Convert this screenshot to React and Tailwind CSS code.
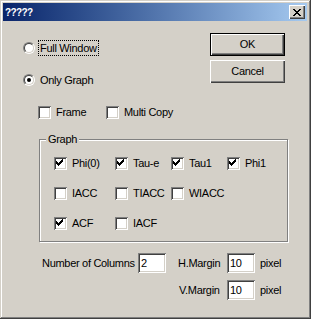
const CHECK = [
  [9, 3], [8, 4], [9, 4], [3, 5], [7, 5], [8, 5], [9, 5],
  [3, 6], [4, 6], [6, 6], [7, 6], [8, 6],
  [3, 7], [4, 7], [5, 7], [6, 7], [7, 7],
  [4, 8], [5, 8], [6, 8], [5, 9],
]

function CheckBox({ checked, label, width }) {
  return (
    <div className="flex items-center" style={{ width }}>
      <div className="w-[13px] h-[13px] bg-white shadow-[inset_1px_1px_#808080,inset_-1px_-1px_#ffffff,inset_2px_2px_#404040,inset_-2px_-2px_#d4d0c8] shrink-0">
        {checked && (
          <svg width="13" height="13" viewBox="0 0 13 13" shapeRendering="crispEdges">
            {CHECK.map(([x, y]) => (
              <rect key={x + "-" + y} x={x - 1} y={y - 1} width="1" height="1" fill="#000" />
            ))}
          </svg>
        )}
      </div>
      <span className="ml-[5px]">{label}</span>
    </div>
  )
}

function Radio({ checked, label, focus }) {
  return (
    <div className="flex items-center h-[16px]">
      <div className="w-[12px] h-[12px] rounded-full border border-t-[#808080] border-l-[#808080] border-b-white border-r-white flex">
        <div className="flex-1 rounded-full border border-t-[#404040] border-l-[#404040] border-b-[#d4d0c8] border-r-[#d4d0c8] bg-white flex items-center justify-center">
          {checked && <div className="w-[4px] h-[4px] rounded-full bg-black" />}
        </div>
      </div>
      <span className={"ml-[3px] px-[1px] leading-[14px] " + (focus ? "border border-dotted border-black" : "border border-transparent")}>
        {label}
      </span>
    </div>
  )
}

function Button({ children, isDefault }) {
  return (
    <div className={"w-[75px] h-[23px] flex items-center justify-center " + (isDefault ? "border border-black shadow-[inset_1px_1px_#ffffff,inset_-1px_-1px_#404040,inset_-2px_-2px_#808080]" : "shadow-[inset_1px_1px_#ffffff,inset_-1px_-1px_#404040,inset_-2px_-2px_#808080]")}>
      {children}
    </div>
  )
}

function Field({ value }) {
  return (
    <div className="w-[28px] h-[20px] bg-white shadow-[inset_1px_1px_#808080,inset_-1px_-1px_#ffffff,inset_2px_2px_#404040,inset_-2px_-2px_#d4d0c8] pl-[3px] flex items-center">
      {value}
    </div>
  )
}

export default function App() {
  return (
    <div
      className="w-[311px] h-[319px] bg-[#d4d0c8] p-[3px] text-[11px] text-black tracking-[-0.3px] shadow-[inset_-1px_-1px_#404040,inset_1px_1px_#d4d0c8,inset_-2px_-2px_#808080,inset_2px_2px_#ffffff] flex flex-col"
      style={{ fontFamily: '"Liberation Sans", Arial, sans-serif' }}
    >
      {/* title bar */}
      <div className="h-[18px] mr-[1px] bg-gradient-to-r from-[#0a246a] to-[#a6caf0] flex items-center pl-[2px] pr-[2px]">
        <span className="text-white text-[10px] font-bold tracking-[-0.6px]">?????</span>
        <div className="ml-auto w-[16px] h-[14px] bg-[#d4d0c8] shadow-[inset_1px_1px_#ffffff,inset_-1px_-1px_#404040,inset_-2px_-2px_#808080] flex items-center justify-center">
          <svg width="8" height="7" viewBox="0 0 8 7" shapeRendering="crispEdges">
            <path d="M0 0h2v1h-2zM6 0h2v1h-2zM1 1h2v1h-2zM5 1h2v1h-2zM2 2h4v1h-4zM3 3h2v1h-2zM2 4h4v1h-4zM1 5h2v1h-2zM5 5h2v1h-2zM0 6h2v1h-2zM6 6h2v1h-2z" fill="#000" />
          </svg>
        </div>
      </div>

      {/* top: radios + buttons */}
      <div className="flex">
        <div className="flex flex-col ml-[20px] mt-[19px] gap-[16px]">
          <Radio label="Full Window" focus />
          <Radio label="Only Graph" checked />
        </div>
        <div className="ml-auto mr-[23px] mt-[12px] flex flex-col gap-[4px]">
          <Button isDefault>OK</Button>
          <Button>Cancel</Button>
        </div>
      </div>

      {/* frame / multi copy */}
      <div className="flex ml-[35px] mt-[18px] h-[13px]">
        <CheckBox label="Frame" width={68} />
        <CheckBox label="Multi Copy" />
      </div>

      {/* Graph group */}
      <div className="relative ml-[36px] mr-[20px] mt-[20px] h-[103px] border border-[#808080] shadow-[1px_1px_#ffffff,inset_1px_1px_#ffffff]">
        <span className="absolute left-[6px] top-[-8px] bg-[#d4d0c8] px-[2px] leading-[14px]">Graph</span>
        <div className="flex flex-col gap-[17px] pl-[14px] pt-[17px]">
          <div className="flex h-[13px]">
            <CheckBox checked label="Phi(0)" width={61} />
            <CheckBox checked label="Tau-e" width={56} />
            <CheckBox checked label="Tau1" width={56} />
            <CheckBox checked label="Phi1" />
          </div>
          <div className="flex h-[13px]">
            <CheckBox label="IACC" width={61} />
            <CheckBox label="TIACC" width={56} />
            <CheckBox label="WIACC" />
          </div>
          <div className="flex h-[13px]">
            <CheckBox checked label="ACF" width={61} />
            <CheckBox label="IACF" />
          </div>
        </div>
      </div>

      {/* margins */}
      <div className="flex flex-col mt-[11px] gap-[7px]">
        <div className="flex items-center">
          <span className="ml-[39px] w-[96px]">Number of Columns</span>
          <Field value="2" />
          <span className="ml-[12px] w-[49px]">H.Margin</span>
          <Field value="10" />
          <span className="ml-[5px]">pixel</span>
        </div>
        <div className="flex items-center">
          <span className="ml-[176px] w-[48px]">V.Margin</span>
          <Field value="10" />
          <span className="ml-[5px]">pixel</span>
        </div>
      </div>
    </div>
  )
}
